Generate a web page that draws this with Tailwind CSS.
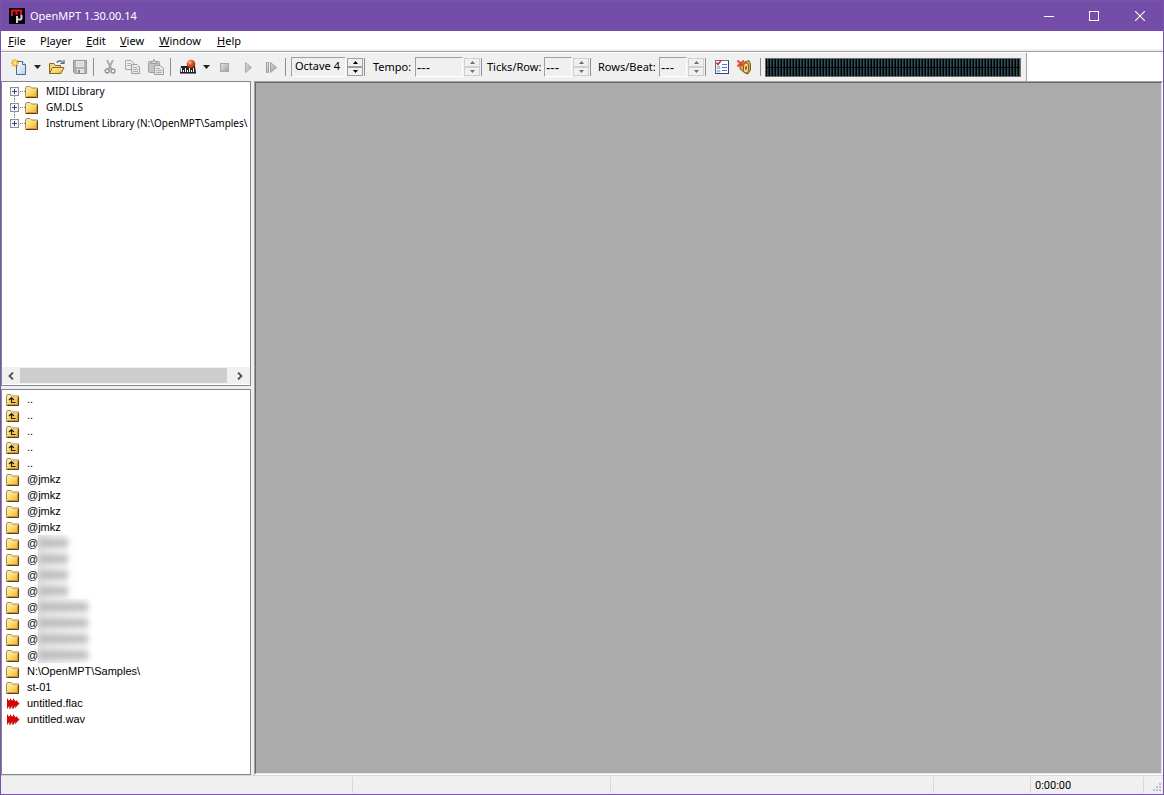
<!DOCTYPE html>
<html lang="en">
<head>
    <meta charset="UTF-8">
    <meta name="viewport" content="width=device-width, initial-scale=1.0">
    <title>OpenMPT 1.30.00.14</title>
    <script src="https://cdn.jsdelivr.net/npm/@tailwindcss/browser@4"></script>
</head>
<body class="bg-[#f0f0f0] font-['Noto_Sans','Open_Sans',sans-serif] text-[12px] leading-4 text-black">

    <!-- Icon sprites -->
    <svg class="absolute size-0" aria-hidden="true">
        <defs>
            <linearGradient id="gold" x1="0" y1="0" x2="1" y2="1">
                <stop offset="0" stop-color="#fff3b8"/><stop offset=".55" stop-color="#fbd567"/><stop offset="1" stop-color="#e0a428"/>
            </linearGradient>
            <linearGradient id="silver" x1="0" y1="0" x2="1" y2="1">
                <stop offset="0" stop-color="#e4e4e4"/><stop offset="1" stop-color="#a0a0a0"/>
            </linearGradient>
            <linearGradient id="paper" x1="0" y1="0" x2="1" y2="1">
                <stop offset="0" stop-color="#ffffff"/><stop offset="1" stop-color="#b8d0ee"/>
            </linearGradient>
            <radialGradient id="ball" cx=".35" cy=".3" r=".7">
                <stop offset="0" stop-color="#ffb79a"/><stop offset=".5" stop-color="#e2502c"/><stop offset="1" stop-color="#a52a12"/>
            </radialGradient>
            <symbol id="folder" viewBox="0 0 14 13">
                <path d="M.5 11.500V2L1.500 .5H5L6.500 2H12.500V11.500Z" fill="url(#gold)" stroke="#a08c5c"/>
                <path d="M12.500 3V11.500H1" fill="none" stroke="#5a4010"/>
                <path d="M11.500 4V10.500H2" fill="none" stroke="#d09a30"/>
            </symbol>
            <symbol id="folder-up" viewBox="0 0 14 13">
                <use href="#folder"/>
                <path d="M5.500 3.500V8.500H9.500M3 6L5.500 3.500L8 6" fill="none" stroke="#26200c" stroke-width="1.200"/>
            </symbol>
            <symbol id="sample" viewBox="0 0 14 13">
                <path d="M3.500 2V11M6.500 2V11M9.500 3V10" stroke="#a06060"/>
                <path d="M1 0L4 4V7L1 11ZM4 0L7 4V7L4 11ZM7 0L10 4V7L7 11ZM10 2L13.500 5.500L10 9Z" fill="#dc0000"/>
            </symbol>
        </defs>
    </svg>

    <div class="flex h-screen flex-col border border-[#7b52ab]">

        <!-- Title bar -->
        <header class="flex h-[30px] shrink-0 items-center bg-[#744da9] text-white">
            <svg class="ml-2 size-4" viewBox="0 0 16 16">
                <rect width="16" height="16" fill="#000"/>
                <path d="M3 8V2M3 2.500H12L13 3.500M7.500 2V7M12 3V7" fill="none" stroke="#e0102c" stroke-width="2"/>
                <path d="M8 15V8M8 11.500H11.500L12.500 10.500V7" fill="none" stroke="#d4d4d4" stroke-width="2"/>
            </svg>
            <h1 class="ml-[5px] grow text-[11px]">OpenMPT 1.30.00.14</h1>
            <button class="flex h-full w-[44px] items-center justify-center" aria-label="Minimize">
                <svg class="size-[10px]" viewBox="0 0 10 10"><path d="M0 5.500H10" stroke="#fff"/></svg>
            </button>
            <button class="flex h-full w-[46px] items-center justify-center" aria-label="Maximize">
                <svg class="size-[10px]" viewBox="0 0 10 10"><rect x=".5" y=".5" width="9" height="9" fill="none" stroke="#fff"/></svg>
            </button>
            <button class="flex h-full w-[46px] items-center justify-center" aria-label="Close">
                <svg class="size-[10px]" viewBox="0 0 10 10"><path d="M0 0L10 10M10 0L0 10" stroke="#fff" stroke-width="1.100"/></svg>
            </button>
        </header>

        <!-- Menu -->
        <nav class="flex h-[18px] shrink-0 items-center bg-white pt-[2px] text-[11px]">
            <button class="w-[32px]"><u>F</u>ile</button>
            <button class="w-[46px]">P<u>l</u>ayer</button>
            <button class="w-[34px]"><u>E</u>dit</button>
            <button class="w-[38px]"><u>V</u>iew</button>
            <button class="w-[58px]"><u>W</u>indow</button>
            <button class="w-[40px]"><u>H</u>elp</button>
        </nav>
        <div class="h-1 shrink-0 border-b border-white bg-[#f0f0f0] shadow-[inset_0_-1px_0_#a0a0a0]"></div>

        <!-- Toolbar -->
        <div class="flex h-7 shrink-0 bg-white">
            <div class="flex items-center border-r border-[#a0a0a0] bg-[#f0f0f0] pr-[5px] pl-[6px] text-[11px]">
                <button class="flex w-[23px] justify-center" aria-label="New">
                    <svg class="size-4" viewBox="0 0 16 16">
                        <path d="M5.500 2.500H11.500L14.500 5.500V15.500H5.500Z" fill="url(#paper)" stroke="#4c688f"/>
                        <path d="M11.500 2.500V5.500H14.500" fill="#fff" stroke="#4c688f"/>
                        <path d="M4 0V8M0 4H8M1 1L7 7M7 1L1 7" stroke="#f2a818" stroke-width="1.300"/>
                        <circle cx="4" cy="4" r="1.700" fill="#fff27a"/>
                    </svg>
                </button>
                <button class="flex w-[15px] justify-center" aria-label="New options">
                    <svg class="h-1 w-[7px]" viewBox="0 0 7 4"><path d="M0 0H7L3.500 4Z" fill="#222"/></svg>
                </button>
                <button class="flex w-[23px] justify-center" aria-label="Open">
                    <svg class="h-4 w-[17px]" viewBox="0 0 17 16">
                        <path d="M1.500 14.500V4.500H6L7.500 6.500H12.500V14.500Z" fill="#f4d27a" stroke="#8a6a24"/>
                        <path d="M1.500 14.500L4.500 8.500H16L13 14.500Z" fill="url(#gold)" stroke="#8a6a24"/>
                        <path d="M9 4C9 2 13 .5 15 4" fill="none" stroke="#48688e" stroke-width="1.200"/>
                        <path d="M12.500 4.500H16V1" fill="none" stroke="#48688e" stroke-width="1.200"/>
                    </svg>
                </button>
                <button class="flex w-[23px] justify-center" aria-label="Save" disabled>
                    <svg class="size-[14px]" viewBox="0 0 14 14">
                        <path d="M.5 .5H13.500V13.500H2L.5 12Z" fill="#b0b0b0" stroke="#989898"/>
                        <rect x="3" y="1" width="8" height="6" fill="#e6e6e6"/>
                        <path d="M4 3H10M4 5H10" stroke="#d0d0d0"/>
                        <rect x="4" y="9" width="7" height="4" fill="#e2e2e2"/><rect x="5" y="10" width="2" height="3" fill="#888"/>
                    </svg>
                </button>
                <i class="mr-[6px] ml-[2px] h-[18px] w-px bg-[#909090]"></i>
                <button class="flex w-[20px] justify-center" aria-label="Cut" disabled>
                    <svg class="h-[14px] w-[12px]" viewBox="0 0 12 14">
                        <path d="M3 0L7.500 9M9 0L4.500 9" stroke="#a8a8a8" stroke-width="1.800"/>
                        <circle cx="3.200" cy="11" r="2" fill="none" stroke="#949494" stroke-width="1.400"/>
                        <circle cx="9" cy="11" r="2" fill="none" stroke="#949494" stroke-width="1.400"/>
                    </svg>
                </button>
                <button class="flex w-[25px] justify-center" aria-label="Copy" disabled>
                    <svg class="h-[14px] w-4" viewBox="0 0 16 14">
                        <path d="M.5 .5H6L8.500 3V9.500H.5Z" fill="#eee" stroke="#a8a8a8"/><path d="M2 3.500H6M2 5.500H6" stroke="#b4b4b4"/>
                        <path d="M6.500 4.500H12L14.500 7V13.500H6.500Z" fill="#e8e8e8" stroke="#a0a0a0"/><path d="M8 7.500H12M8 9.500H13M8 11.500H13" stroke="#b0b0b0"/>
                    </svg>
                </button>
                <button class="flex w-[22px] justify-center" aria-label="Paste" disabled>
                    <svg class="size-4" viewBox="0 0 16 16">
                        <rect x=".5" y="2.500" width="11" height="11" rx="1" fill="#c4c4c4" stroke="#a0a0a0"/>
                        <path d="M3 4.500V2.500H5L6 .5L7 2.500H9V4.500Z" fill="#ddd" stroke="#999"/>
                        <path d="M6.500 6.500H12.500L15.500 9.500V15.500H6.500Z" fill="#e8e8e8" stroke="#a0a0a0"/><path d="M8 9.500H12M8 11.500H14M8 13.500H14" stroke="#b0b0b0"/>
                    </svg>
                </button>
                <i class="mr-[5px] ml-[3px] h-[18px] w-px bg-[#909090]"></i>
                <button class="flex w-[23px] justify-center" aria-label="MIDI record">
                    <svg class="size-4" viewBox="0 0 16 16">
                        <path d="M1 7H15L16 14H0Z" fill="#222"/>
                        <path d="M1.500 9V13M3.500 11V13M5.500 9V13M7.500 11V13M9.500 9V13M11.500 11V13M13.500 9V13" stroke="#fff"/>
                        <path d="M0 14.500H16" stroke="#777"/>
                        <circle cx="11" cy="5" r="4.300" fill="url(#ball)"/>
                    </svg>
                </button>
                <button class="flex w-[14px] justify-center" aria-label="MIDI options">
                    <svg class="h-1 w-[7px]" viewBox="0 0 7 4"><path d="M0 0H7L3.500 4Z" fill="#222"/></svg>
                </button>
                <button class="flex w-[23px] justify-center" aria-label="Stop" disabled>
                    <svg class="size-[9px]" viewBox="0 0 9 9"><rect x=".5" y=".5" width="8" height="8" fill="url(#silver)" stroke="#a8a8a8"/></svg>
                </button>
                <button class="flex w-[24px] justify-center" aria-label="Play" disabled>
                    <svg class="h-[11px] w-[7px]" viewBox="0 0 7 11"><path d="M.5 .5L6.500 5.500L.5 10.500Z" fill="url(#silver)" stroke="#a8a8a8"/></svg>
                </button>
                <button class="flex w-[23px] justify-center" aria-label="Play pattern" disabled>
                    <svg class="h-[11px] w-[11px]" viewBox="0 0 11 11"><path d="M.5 .5H2.500V10.500H.5ZM4.500 .5L10.500 5.500L4.500 10.500Z" fill="url(#silver)" stroke="#a0a0a0"/></svg>
                </button>
                <i class="mr-[5px] ml-[2px] h-[18px] w-px bg-[#909090]"></i>

                <output class="h-[20px] w-[55px] border border-t-[#a0a0a0] border-r-white border-b-white border-l-[#a0a0a0] pl-[3px] whitespace-nowrap">Octave 4</output>
                <span class="ml-px flex w-4 flex-col">
                    <button class="flex h-[9px] items-center justify-center border border-[#a0a0a0]" aria-label="Octave up"><svg class="h-[3px] w-[5px]" viewBox="0 0 5 3"><path d="M0 3H5L2.500 0Z"/></svg></button>
                    <button class="flex h-[9px] items-center justify-center border border-[#a0a0a0]" aria-label="Octave down"><svg class="h-[3px] w-[5px]" viewBox="0 0 5 3"><path d="M0 0H5L2.500 3Z"/></svg></button>
                </span>
                <i class="ml-px h-[18px] w-px bg-[#909090]"></i>

                <label for="tempo" class="ml-2 w-[42px] whitespace-nowrap">Tempo:</label>
                <input id="tempo" value="---" disabled class="h-[20px] w-[48px] border border-t-[#a0a0a0] border-r-white border-b-white border-l-[#a0a0a0] pl-px font-['Liberation_Sans'] text-[13px]">
                <span class="ml-px flex w-4 flex-col">
                    <button disabled class="flex h-[9px] items-center justify-center border border-[#d0d0d0]" aria-label="Tempo up"><svg class="h-[3px] w-[5px]" viewBox="0 0 5 3"><path d="M0 3H5L2.500 0Z" fill="#6d6d6d"/></svg></button>
                    <button disabled class="flex h-[9px] items-center justify-center border border-[#d0d0d0]" aria-label="Tempo down"><svg class="h-[3px] w-[5px]" viewBox="0 0 5 3"><path d="M0 0H5L2.500 3Z" fill="#6d6d6d"/></svg></button>
                </span>
                <i class="ml-px h-[18px] w-px bg-[#909090]"></i>

                <label for="ticks" class="ml-[5px] w-[57px] whitespace-nowrap">Ticks/Row:</label>
                <input id="ticks" value="---" disabled class="h-[20px] w-[28px] border border-t-[#a0a0a0] border-r-white border-b-white border-l-[#a0a0a0] pl-px font-['Liberation_Sans'] text-[13px]">
                <span class="ml-px flex w-4 flex-col">
                    <button disabled class="flex h-[9px] items-center justify-center border border-[#d0d0d0]" aria-label="Ticks up"><svg class="h-[3px] w-[5px]" viewBox="0 0 5 3"><path d="M0 3H5L2.500 0Z" fill="#6d6d6d"/></svg></button>
                    <button disabled class="flex h-[9px] items-center justify-center border border-[#d0d0d0]" aria-label="Ticks down"><svg class="h-[3px] w-[5px]" viewBox="0 0 5 3"><path d="M0 0H5L2.500 3Z" fill="#6d6d6d"/></svg></button>
                </span>
                <i class="ml-px h-[18px] w-px bg-[#909090]"></i>

                <label for="rows" class="ml-[7px] w-[61px] whitespace-nowrap">Rows/Beat:</label>
                <input id="rows" value="---" disabled class="h-[20px] w-[28px] border border-t-[#a0a0a0] border-r-white border-b-white border-l-[#a0a0a0] pl-px font-['Liberation_Sans'] text-[13px]">
                <span class="ml-px flex w-4 flex-col">
                    <button disabled class="flex h-[9px] items-center justify-center border border-[#d0d0d0]" aria-label="Rows up"><svg class="h-[3px] w-[5px]" viewBox="0 0 5 3"><path d="M0 3H5L2.500 0Z" fill="#6d6d6d"/></svg></button>
                    <button disabled class="flex h-[9px] items-center justify-center border border-[#d0d0d0]" aria-label="Rows down"><svg class="h-[3px] w-[5px]" viewBox="0 0 5 3"><path d="M0 0H5L2.500 3Z" fill="#6d6d6d"/></svg></button>
                </span>
                <i class="mr-[5px] ml-px h-[18px] w-px bg-[#909090]"></i>

                <button class="flex w-[22px] justify-center" aria-label="Options">
                    <svg class="h-[14px] w-[14px]" viewBox="0 0 14 14">
                        <rect x=".5" y=".5" width="13" height="13" fill="#fff" stroke="#5d6f92"/>
                        <path d="M0 13.500H14M13.500 1V14" stroke="#34466e"/>
                        <path d="M7 4.500H12M7 7.500H12M7 10.500H12" stroke="#4a78d8"/>
                        <path d="M2 6.500H5V8.500H2ZM2 10.500H5V12H2Z" fill="#cdd6ea" stroke="#8d9cba" stroke-width=".6"/>
                        <path d="M1.500 2.500L3 4.500L6 .5" fill="none" stroke="#e02020" stroke-width="1.400"/>
                    </svg>
                </button>
                <button class="flex w-[22px] justify-center" aria-label="Panic">
                    <svg class="h-[15px] w-[14px]" viewBox="0 0 14 15">
                        <path d="M3 6L8 2L12 .5L13.500 4V10L11 14L8 13L3 9Z" fill="#d8ae48" stroke="#80601c"/>
                        <ellipse cx="9" cy="8" rx="2.600" ry="5" fill="#f5dc92" stroke="#7a5a18"/>
                        <ellipse cx="9" cy="8" rx="1" ry="2" fill="#7a5a18"/>
                        <path d="M.5 .5L7 6.500M7 .5L.5 6.500" stroke="#f04030" stroke-width="2"/>
                    </svg>
                </button>
                <i class="mr-1 ml-[5px] h-[18px] w-px bg-[#909090]"></i>

                <!-- VU meter -->
                <div class="flex h-[19px] w-[256px] flex-col gap-px border border-[#707070] bg-black">
                    <div class="grow bg-[repeating-linear-gradient(90deg,#000_0_1px,#2f4f58_1px_2px,#16292f_2px_3px)]"></div>
                    <div class="grow bg-[repeating-linear-gradient(90deg,#000_0_1px,#2f4f58_1px_2px,#16292f_2px_3px)]"></div>
                </div>
            </div>
        </div>

        <!-- Workspace -->
        <main class="flex min-h-0 grow">
            <aside class="flex w-[250px] shrink-0 flex-col gap-[3px] font-['Liberation_Sans',Arial,sans-serif] text-[11px]">
                <section class="flex h-[305px] shrink-0 flex-col border border-[#828790] bg-white">
                    <ul id="tree" class="grow overflow-hidden pt-px pl-2 font-['Noto_Sans',sans-serif] text-[10px]"></ul>
                    <div class="mb-px flex h-[17px] items-center bg-[#f0f0f0]">
                        <button class="flex w-[18px] justify-center" aria-label="Scroll left"><svg class="h-2 w-[6px]" viewBox="0 0 6 8"><path d="M5 .5L1.500 4L5 7.500" fill="none" stroke="#505050" stroke-width="1.800"/></svg></button>
                        <div class="mr-[3px] h-[15px] grow bg-[#cdcdcd]"></div>
                        <button class="flex w-[20px] justify-center" aria-label="Scroll right"><svg class="h-2 w-[6px]" viewBox="0 0 6 8"><path d="M1 .5L4.500 4L1 7.500" fill="none" stroke="#505050" stroke-width="1.800"/></svg></button>
                    </div>
                </section>
                <ul id="files" class="grow overflow-hidden border border-[#828790] bg-white pt-px pl-1"></ul>
            </aside>
            <section class="ml-[3px] grow border border-t-[#a0a0a0] border-r-white border-b-white border-l-[#a0a0a0]">
                <div class="h-full border border-t-[#696969] border-r-[#e3e3e3] border-b-[#e3e3e3] border-l-[#696969] bg-[#ababab]"></div>
            </section>
        </main>

        <!-- Status bar -->
        <footer class="flex h-[19px] shrink-0 border-t border-[#d7d7d7] py-px font-[Roboto,sans-serif] text-[11px] leading-[18px]">
            <div class="w-[352px] border-r border-[#d7d7d7]"></div>
            <div class="w-[258px] border-r border-[#d7d7d7]"></div>
            <div class="grow border-r border-[#d7d7d7]"></div>
            <div class="w-[97px] border-r border-[#d7d7d7]"></div>
            <div class="w-[113px] border-r border-[#d7d7d7] pl-1">0:00:00</div>
            <div class="flex w-[19px] items-end justify-end">
                <svg class="size-[10px]" viewBox="0 0 10 10" fill="#bfbfbf"><path d="M6 0H8V2H6ZM3 3H5V5H3ZM6 3H8V5H6ZM0 6H2V8H0ZM3 6H5V8H3ZM6 6H8V8H6Z"/></svg>
            </div>
        </footer>
    </div>

    <script>
        // --- DATA ---
        const libraries = ['MIDI Library', 'GM.DLS', 'Instrument Library (N:\\OpenMPT\\Samples\\'];
        const files = [
            ...Array(5).fill({ icon: 'folder-up', name: '..' }),
            ...Array(4).fill({ icon: 'folder', name: '@jmkz' }),
            ...Array(4).fill({ icon: 'folder', name: '@', blur: 30 }),
            ...Array(4).fill({ icon: 'folder', name: '@', blur: 50 }),
            { icon: 'folder', name: 'N:\\OpenMPT\\Samples\\' },
            { icon: 'folder', name: 'st-01' },
            { icon: 'sample', name: 'untitled.flac' },
            { icon: 'sample', name: 'untitled.wav' }
        ];

        // --- RENDER ---
        document.getElementById('tree').innerHTML = libraries.map((name, i) => `
            <li class="flex h-4 items-center whitespace-nowrap">
                <svg class="h-4 w-[15px] shrink-0" viewBox="0 0 15 16">
                    <path d="${i ? 'M4.500 0V4' : ''}${i < 2 ? 'M4.500 13V16' : ''}M10 8.500H15" stroke="#808080" stroke-dasharray="1 1"/>
                    <rect x=".5" y="4.500" width="8" height="8" fill="#f6f6f6" stroke="#919191"/>
                    <path d="M2 8.500H7M4.500 6V11" stroke="#2b4a9c"/>
                </svg>
                <svg class="mt-[2px] h-[13px] w-[14px] shrink-0"><use href="#folder"/></svg>
                <span class="ml-[7px]">${name}</span>
            </li>`).join('');

        document.getElementById('files').innerHTML = files.map(f => `
            <li class="flex h-4 items-center whitespace-nowrap">
                <svg class="mt-[2px] h-[13px] w-[14px] shrink-0"><use href="#${f.icon}"/></svg>
                <span class="ml-[7px]">${f.name}</span>
                ${f.blur ? `<span class="h-4 bg-linear-to-r from-[#e4e4e4] to-[#fafafa]"><span class="mt-1 block h-2 bg-[#b8b8b8] blur-[3px]" style="width:${f.blur}px"></span></span>` : ''}
            </li>`).join('');
    </script>
</body>
</html>
